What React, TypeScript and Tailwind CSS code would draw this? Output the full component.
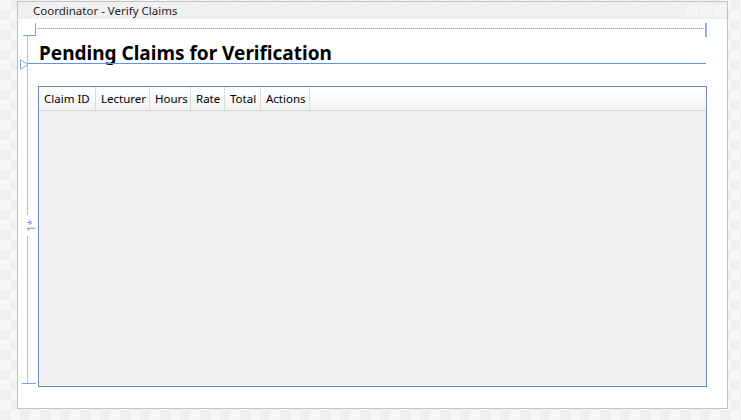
const columns = [
  { label: "Claim ID", w: "w-[57px]" },
  { label: "Lecturer", w: "w-[54px]" },
  { label: "Hours", w: "w-[41px]" },
  { label: "Rate", w: "w-[34px]" },
  { label: "Total", w: "w-[36px]" },
  { label: "Actions", w: "w-[49px]" },
];

function Adorners() {
  return (
    <>
      {/* top-left corner tick */}
      <div className="absolute left-[5px] top-[4px] h-[13px] w-[13px] border-b border-r border-[#7fa3e6]" />
      {/* top dotted guide */}
      <div className="absolute left-[19px] top-[9px] h-[1px] w-[669px] bg-[image:repeating-linear-gradient(to_right,#7fa3e6_0_1px,#d3e0f7_1px_2px)]" />
      {/* right tick */}
      <div className="absolute left-[687px] top-[4px] h-[14px] w-[2px] bg-[#8fb0ee]" />
      {/* left dotted guide */}
      <div className="absolute left-[9px] top-[17px] h-[348px] w-[1px] bg-[image:repeating-linear-gradient(to_bottom,#7fa3e6_0_1px,#d3e0f7_1px_2px)]" />
      {/* bottom tick */}
      <div className="absolute left-[4px] top-[364px] h-[1px] w-[14px] bg-[#7fa3e6]" />
      {/* row divider */}
      <div className="absolute left-[10px] top-[44px] h-[1px] w-[678px] bg-[#5f93ea]" />
      {/* row marker */}
      <svg className="absolute left-[2px] top-[40px]" width="9" height="11" viewBox="0 0 9 11">
        <path d="M0.5 0.8 L8 5.5 L0.5 10.2 Z" fill="white" stroke="#7ea6e6" strokeWidth="1" />
      </svg>
      {/* star size label */}
      <div className="absolute left-[5px] top-[196px] flex h-[20px] w-[15px] items-center justify-center bg-white">
        <span className="block -rotate-90 whitespace-nowrap text-[11px] leading-none text-[#6f9be6]">1*</span>
      </div>
    </>
  );
}

export default function App() {
  return (
    <div className="h-[420px] w-[741px] overflow-hidden bg-[#f7f7f7] bg-[image:repeating-conic-gradient(#efefef_0_25%,#f7f7f7_0_50%)] bg-[length:20px_20px] pt-[1px] pl-[17px] font-['Noto_Sans','Open_Sans',sans-serif]">
      <div className="flex h-[408px] w-[711px] flex-col border border-[#c2c2c2] bg-white">
        <div className="flex h-[17px] items-center justify-between bg-[#f0f0f0] pl-[15px] pr-[1px]">
          <span className="text-[11.5px] leading-none text-[#1e1e1e]">Coordinator - Verify Claims</span>
          <div className="flex gap-[2px]">
            <div className="h-[12px] w-[12px] bg-[#f5f5f5]" />
            <div className="h-[12px] w-[12px] bg-[#f5f5f5]" />
            <div className="h-[12px] w-[12px] bg-[#f5f5f5]" />
          </div>
        </div>
        <div className="relative flex-1 pl-[20px] pr-[20px]">
          <Adorners />
          <h1 className="mt-[21px] pl-[1px] text-[19px] font-bold leading-[26px] text-black">
            Pending Claims for Verification
          </h1>
          <div className="mt-[20px] flex h-[301px] w-[669px] flex-col border border-[#6a8cbc] bg-[#f0f0f0]">
            <div className="flex h-[24px] border-b border-[#d5d5d5] bg-gradient-to-b from-white to-[#f2f3f5]">
              {columns.map((c) => (
                <div
                  key={c.label}
                  className={`${c.w} flex items-center border-r border-[#dcdcdc] pl-[5px] text-[11.5px] text-black`}
                >
                  {c.label}
                </div>
              ))}
              <div className="flex-1" />
            </div>
            <div className="flex-1" />
          </div>
        </div>
      </div>
    </div>
  );
}
